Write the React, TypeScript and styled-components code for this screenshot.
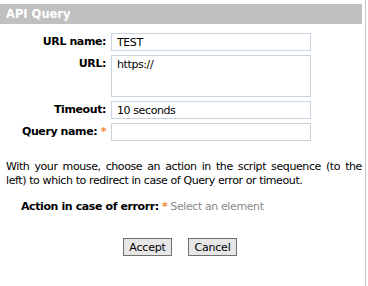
import React from "react";
import styled, { createGlobalStyle } from "styled-components";

const Global = createGlobalStyle`
  html, body { margin: 0; padding: 0; background: #fff; }
  body { font-family: "DejaVu Sans", Verdana, sans-serif; font-size: 11px; color: #000; letter-spacing: -0.4px; }
`;

const Panel = styled.div`
  width: 366px;
  height: 286px;
  border-right: 1px solid #c4c4c4;
  padding-top: 4px;
  box-sizing: border-box;
`;

const Header = styled.div`
  width: 362px;
  height: 20px;
  background: #c0c0c0;
  color: #fff;
  font-weight: bold;
  font-size: 11.5px;
  letter-spacing: 0;
  line-height: 21px;
  padding-left: 6px;
  box-sizing: border-box;
`;

const Form = styled.div`
  display: grid;
  grid-template-columns: 106px 200px;
  column-gap: 5px;
  row-gap: 4px;
  margin-top: 9px;
  align-items: start;
`;

const Label = styled.div`
  text-align: right;
  font-weight: bold;
  line-height: 18px;
  white-space: nowrap;
`;

const Star = styled.span`
  color: #f08a2c;
  font-weight: bold;
`;

const Field = styled.div<{ $h: number }>`
  height: ${(p) => p.$h}px;
  border: 1px solid #c8d3de;
  box-sizing: border-box;
  padding: 2px 5px;
  line-height: 13px;
`;

const Note = styled.p`
  margin: 19px 6px 0 6px;
  width: 356px;
  line-height: 14px;
  text-align: justify;
`;

const ActionRow = styled.div`
  margin: 12px 0 0 21px;
  line-height: 14px;
`;

const Strong = styled.b``;

const Hint = styled.span`
  color: #8a8a8a;
`;

const Buttons = styled.div`
  display: flex;
  gap: 16px;
  margin-top: 24px;
  padding-left: 123px;
`;

const Button = styled.button`
  width: 49px;
  height: 18px;
  padding: 0;
  font-family: "DejaVu Sans", Verdana, sans-serif;
  font-size: 11px;
  letter-spacing: -0.2px;
  background: #e6e6e6;
  border: 1px solid #707070;
  color: #000;
`;

export default function App() {
  return (
    <>
      <Global />
      <Panel>
        <Header>API Query</Header>
        <Form>
          <Label>URL name:</Label>
          <Field $h={18}>TEST</Field>
          <Label>URL:</Label>
          <Field $h={42}>https://</Field>
          <Label>Timeout:</Label>
          <Field $h={18}>10 seconds</Field>
          <Label>
            Query name: <Star>*</Star>
          </Label>
          <Field $h={18}></Field>
        </Form>
        <Note>
          With your mouse, choose an action in the script sequence (to the left) to which to redirect in case of Query error or timeout.
        </Note>
        <ActionRow>
          <Strong>Action in case of errorr:</Strong> <Star>*</Star> <Hint>Select an element</Hint>
        </ActionRow>
        <Buttons>
          <Button>Accept</Button>
          <Button>Cancel</Button>
        </Buttons>
      </Panel>
    </>
  );
}
